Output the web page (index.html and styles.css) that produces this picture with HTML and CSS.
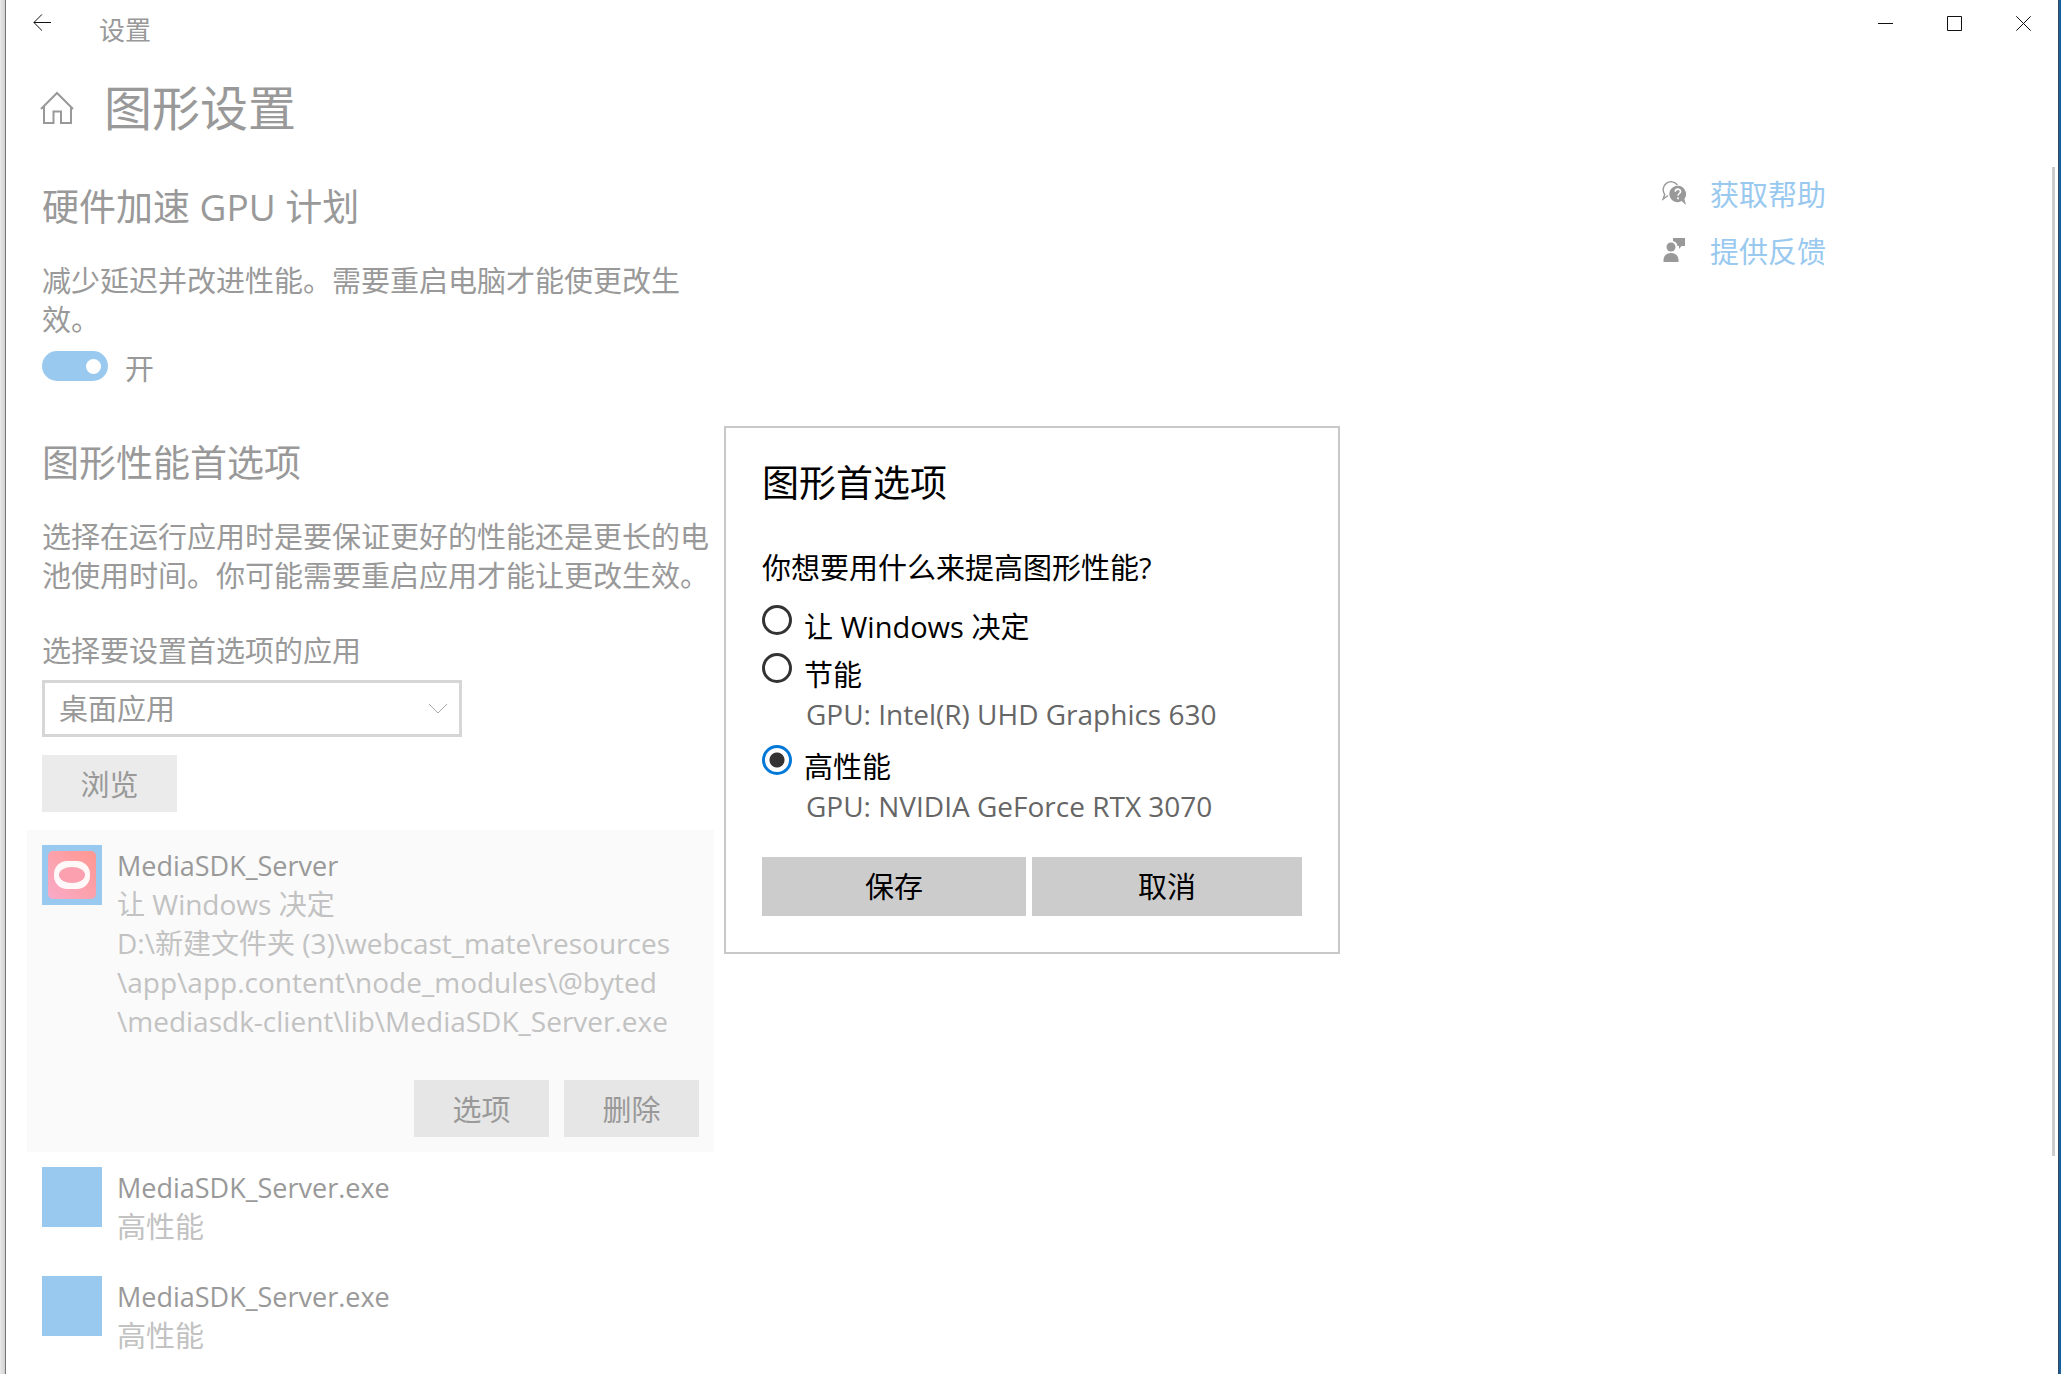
FILE: index.html
```html
<!DOCTYPE html>
<html lang="zh-CN">
<head>
  <meta charset="UTF-8" />
  <meta name="viewport" content="width=device-width, initial-scale=1.0" />
  <title>设置</title>
  <link rel="stylesheet" href="styles.css">
</head>
<body>
  <div class="window">
    <header class="titlebar">
      <button class="back" aria-label="返回">
        <svg width="18" height="17" viewBox="0 0 18 17"><path d="M18 8.500H.8M9 .4L.9 8.500 9 16.600" /></svg>
      </button>
      <span class="titlebar-text">设置</span>
      <div class="window-controls">
        <button aria-label="最小化"><svg width="15" height="15" viewBox="0 0 15 15"><path d="M0 7.500h15" /></svg></button>
        <button aria-label="最大化"><svg width="15" height="15" viewBox="0 0 15 15"><path d="M.5.5h14v14H.5z" /></svg></button>
        <button aria-label="关闭"><svg width="15" height="15" viewBox="0 0 15 15"><path d="M.3.3l14.400 14.400M14.700.3L.3 14.700" /></svg></button>
      </div>
    </header>

    <div class="page-title">
      <svg width="34" height="34" viewBox="0 0 34 34"><path d="M1 18L17 2l16 16M4 15.500V32h9.500V20.500h7.500V32H31V15.500" /></svg>
      <h1>图形设置</h1>
    </div>

    <div class="content">
      <main class="settings">
        <h2>硬件加速 GPU 计划</h2>
        <p>减少延迟并改进性能。需要重启电脑才能使更改生效。</p>
        <div class="toggle-row">
          <input type="checkbox" class="toggle" id="gpu-plan" checked>
          <label for="gpu-plan">开</label>
        </div>

        <h2 class="second">图形性能首选项</h2>
        <p>选择在运行应用时是要保证更好的性能还是更长的电池使用时间。你可能需要重启应用才能让更改生效。</p>

        <label class="field-label" for="app-type">选择要设置首选项的应用</label>
        <div class="select-box">
          <select id="app-type">
            <option>桌面应用</option>
            <option>Microsoft Store 应用</option>
          </select>
          <svg width="20" height="12" viewBox="0 0 20 12"><path d="M1 1l9 9 9-9" /></svg>
        </div>
        <button class="btn browse">浏览</button>

        <ul class="app-list">
          <li class="app selected">
            <div class="app-icon">
              <svg width="48" height="48" viewBox="0 0 48 48">
                <defs>
                  <linearGradient id="pink" x1="0" y1="1" x2="1" y2="0">
                    <stop offset="0" stop-color="#f9abc8" />
                    <stop offset="1" stop-color="#ff9790" />
                  </linearGradient>
                </defs>
                <rect width="48" height="48" rx="5" fill="url(#pink)" />
                <rect x="6" y="10" width="36" height="28" rx="13" fill="#fff" opacity=".92" />
                <ellipse cx="24" cy="24" rx="13" ry="8" fill="#fc9fae" />
              </svg>
            </div>
            <div class="app-info">
              <div class="app-name">MediaSDK_Server</div>
              <div class="app-detail">让 Windows 决定</div>
              <div class="app-detail">D:\新建文件夹 (3)\webcast_mate\resources<br>\app\app.content\node_modules\@byted<br>\mediasdk-client\lib\MediaSDK_Server.exe</div>
            </div>
            <div class="app-actions">
              <button class="btn">选项</button>
              <button class="btn">删除</button>
            </div>
          </li>
          <li class="app">
            <div class="app-icon"></div>
            <div class="app-info">
              <div class="app-name">MediaSDK_Server.exe</div>
              <div class="app-mode">高性能</div>
            </div>
          </li>
          <li class="app">
            <div class="app-icon"></div>
            <div class="app-info">
              <div class="app-name">MediaSDK_Server.exe</div>
              <div class="app-mode">高性能</div>
            </div>
          </li>
        </ul>
      </main>

      <aside class="links">
        <a href="#">
          <svg width="24" height="24" viewBox="0 0 24 24">
            <path d="M6 14.500L1 18.200l1.700-4.700A7.600 7.600 0 1 1 15.400 4" fill="none" stroke="#999" stroke-width="1.400" />
            <path d="M16 4.800a8.200 8.200 0 1 0 3.600 15.300L24 23.900l-1.600-6A8.200 8.200 0 0 0 16 4.800z" fill="#999" />
            <path d="M13.300 10.800c0-3.600 5.400-3.400 5.200-.2-.1 1.900-2.500 2-2.500 4.200M16 16.300v1.900" fill="none" stroke="#fff" stroke-width="1.600" />
          </svg>
          获取帮助
        </a>
        <a href="#">
          <svg width="24" height="24" viewBox="0 0 24 24">
            <path d="M11 0h12v8h-3.500L17 11V8h-1.500a6 6 0 0 0-4.500-5z" fill="#999" />
            <circle cx="9" cy="9" r="4.500" fill="#999" />
            <path d="M1.500 24v-2c0-4 3-7 7.500-7s7.500 3 7.500 7v2z" fill="#999" />
          </svg>
          提供反馈
        </a>
      </aside>
    </div>
    <div class="scrollbar"></div>
  </div>

  <div class="overlay">
    <form class="dialog" role="dialog" aria-labelledby="dialog-title">
      <h2 id="dialog-title">图形首选项</h2>
      <p>你想要用什么来提高图形性能?</p>
      <div class="option">
        <input type="radio" name="gpu" id="opt-auto">
        <label for="opt-auto">让 Windows 决定</label>
      </div>
      <div class="option">
        <input type="radio" name="gpu" id="opt-save">
        <label for="opt-save">节能</label>
      </div>
      <div class="gpu-name">GPU: Intel(R) UHD Graphics 630</div>
      <div class="option">
        <input type="radio" name="gpu" id="opt-high" checked>
        <label for="opt-high">高性能</label>
      </div>
      <div class="gpu-name">GPU: NVIDIA GeForce RTX 3070</div>
      <div class="dialog-buttons">
        <button type="button">保存</button>
        <button type="button">取消</button>
      </div>
    </form>
  </div>
</body>
</html>
```
FILE: styles.css
```css
* {
  box-sizing: border-box;
}
body {
  margin: 0;
  height: 100vh;
  overflow: hidden;
  padding: 0 2px 0 5px;
  background: linear-gradient(to right, #e9e9e9 0, #d2d2d2 5px, #1b5f99 5px);
  font-family: "Open Sans", "Noto Sans CJK SC", sans-serif;
  font-size: 29px;
  line-height: 39px;
  color: #999;
}
h1, h2, p, ul {
  margin: 0;
  padding: 0;
  font-weight: 400;
}
button, select {
  font: inherit;
  color: inherit;
  border: none;
  border-radius: 0;
  padding: 0;
}
svg {
  flex: none;
}
.window {
  position: relative;
  height: 100%;
  overflow: hidden;
  background: #fff;
  border-left: 1px solid #757575;
  border-right: 1px solid #2c4a66;
}

/* title bar */
.titlebar {
  display: flex;
  align-items: flex-start;
  height: 60px;
}
.titlebar button {
  display: flex;
  align-items: center;
  justify-content: center;
  width: 69px;
  height: 47px;
  background: none;
}
.titlebar svg {
  fill: none;
  stroke: #111;
  stroke-width: 1;
}
.titlebar .back {
  width: 72px;
  height: 45px;
}
.titlebar-text {
  margin-left: 21px;
  font-size: 26px;
  line-height: 60px;
}
.window-controls {
  display: flex;
  margin-left: auto;
}

.page-title {
  display: flex;
  align-items: center;
  gap: 30px;
  height: 96px;
  padding-left: 34px;
}
.page-title svg {
  fill: none;
  stroke: #999;
  stroke-width: 2;
}
h1 {
  font-size: 48px;
  line-height: 60px;
}
h2 {
  font-size: 37px;
  line-height: 50px;
}

/* settings column */
.content {
  display: flex;
  justify-content: space-between;
  padding: 0 232px 0 36px;
}
.settings {
  width: 672px;
  padding-top: 26px;
}
.settings p {
  margin-top: 29px;
}
.settings .second {
  margin-top: 51px;
}
.toggle-row {
  display: flex;
  gap: 17px;
  margin-top: 12px;
  line-height: 36px;
}
.toggle {
  appearance: none;
  display: flex;
  align-items: center;
  justify-content: flex-end;
  width: 66px;
  height: 30px;
  margin: 0;
  padding-right: 7px;
  border-radius: 15px;
  background: #99c9ef;
}
.toggle::before {
  content: "";
  width: 15px;
  height: 15px;
  border-radius: 50%;
  background: #fff;
}
.field-label {
  display: block;
  margin-top: 36px;
}
.select-box {
  display: grid;
  align-items: center;
  width: 420px;
  height: 57px;
  margin-top: 10px;
}
.select-box select {
  appearance: none;
  grid-area: 1 / 1;
  width: 100%;
  height: 100%;
  padding: 0 14px;
  border: 3px solid #d6d6d6;
  background: #fff;
}
.select-box svg {
  grid-area: 1 / 1;
  justify-self: end;
  margin-right: 14px;
  fill: none;
  stroke: #aaa;
  stroke-width: 1;
  pointer-events: none;
}
.btn {
  width: 135px;
  height: 57px;
  padding-top: 2px;
  background: #ebebeb;
}
.browse {
  display: block;
  margin-top: 18px;
}

/* app list */
.app-list {
  margin: 18px 0 0 -15px;
  list-style: none;
}
.app {
  display: flex;
  flex-wrap: wrap;
  gap: 0 15px;
  padding: 15px;
}
.app.selected {
  background: #fafafa;
}
.app-icon {
  display: flex;
  align-items: center;
  justify-content: center;
  width: 60px;
  height: 60px;
  background: #99c9ef;
}
.app-info {
  flex: 1;
  white-space: nowrap;
}
.app-name {
  padding-top: 1px;
  font-size: 27px;
}
.app-detail {
  font-size: 28px;
  color: #c2c2c2;
}
.app-mode {
  color: #c2c2c2;
}
.app-actions {
  display: flex;
  justify-content: flex-end;
  gap: 15px;
  width: 100%;
  margin-top: 39px;
}
.app-actions .btn {
  background: #e6e6e6;
}

/* help links */
.links {
  padding-top: 10px;
}
.links a {
  display: flex;
  align-items: center;
  gap: 24px;
  line-height: 57px;
  color: #99c9ef;
  text-decoration: none;
}
.links svg {
  margin-bottom: 3px;
}

.scrollbar {
  position: absolute;
  top: 167px;
  right: 3px;
  width: 3px;
  height: 72%;
  background: #ccc;
}

/* dialog */
.overlay {
  position: fixed;
  inset: 5px 0 0 3px;
  display: flex;
  align-items: center;
  justify-content: center;
}
.dialog {
  width: 616px;
  padding: 30px 36px 36px;
  border: 2px solid #c8c8c8;
  background: #fff;
  color: #000;
}
.dialog p {
  margin: 40px 0 12px;
}
.option {
  display: flex;
  gap: 12px;
  height: 48px;
  line-height: 56px;
}
.option input {
  appearance: none;
  width: 30px;
  height: 30px;
  margin: 6px 0 0;
  border: 3px solid #333;
  border-radius: 50%;
}
.option input:checked {
  border-color: #0078d7;
  background: radial-gradient(circle, #333 7px, #fff 8px);
}
.gpu-name {
  padding: 0 0 6px 44px;
  font-size: 28px;
  line-height: 38px;
  color: #666;
}
.dialog-buttons {
  display: grid;
  grid-template-columns: 44fr 45fr;
  gap: 6px;
  margin-top: 26px;
}
.dialog-buttons button {
  height: 59px;
  background: #ccc;
}
```
